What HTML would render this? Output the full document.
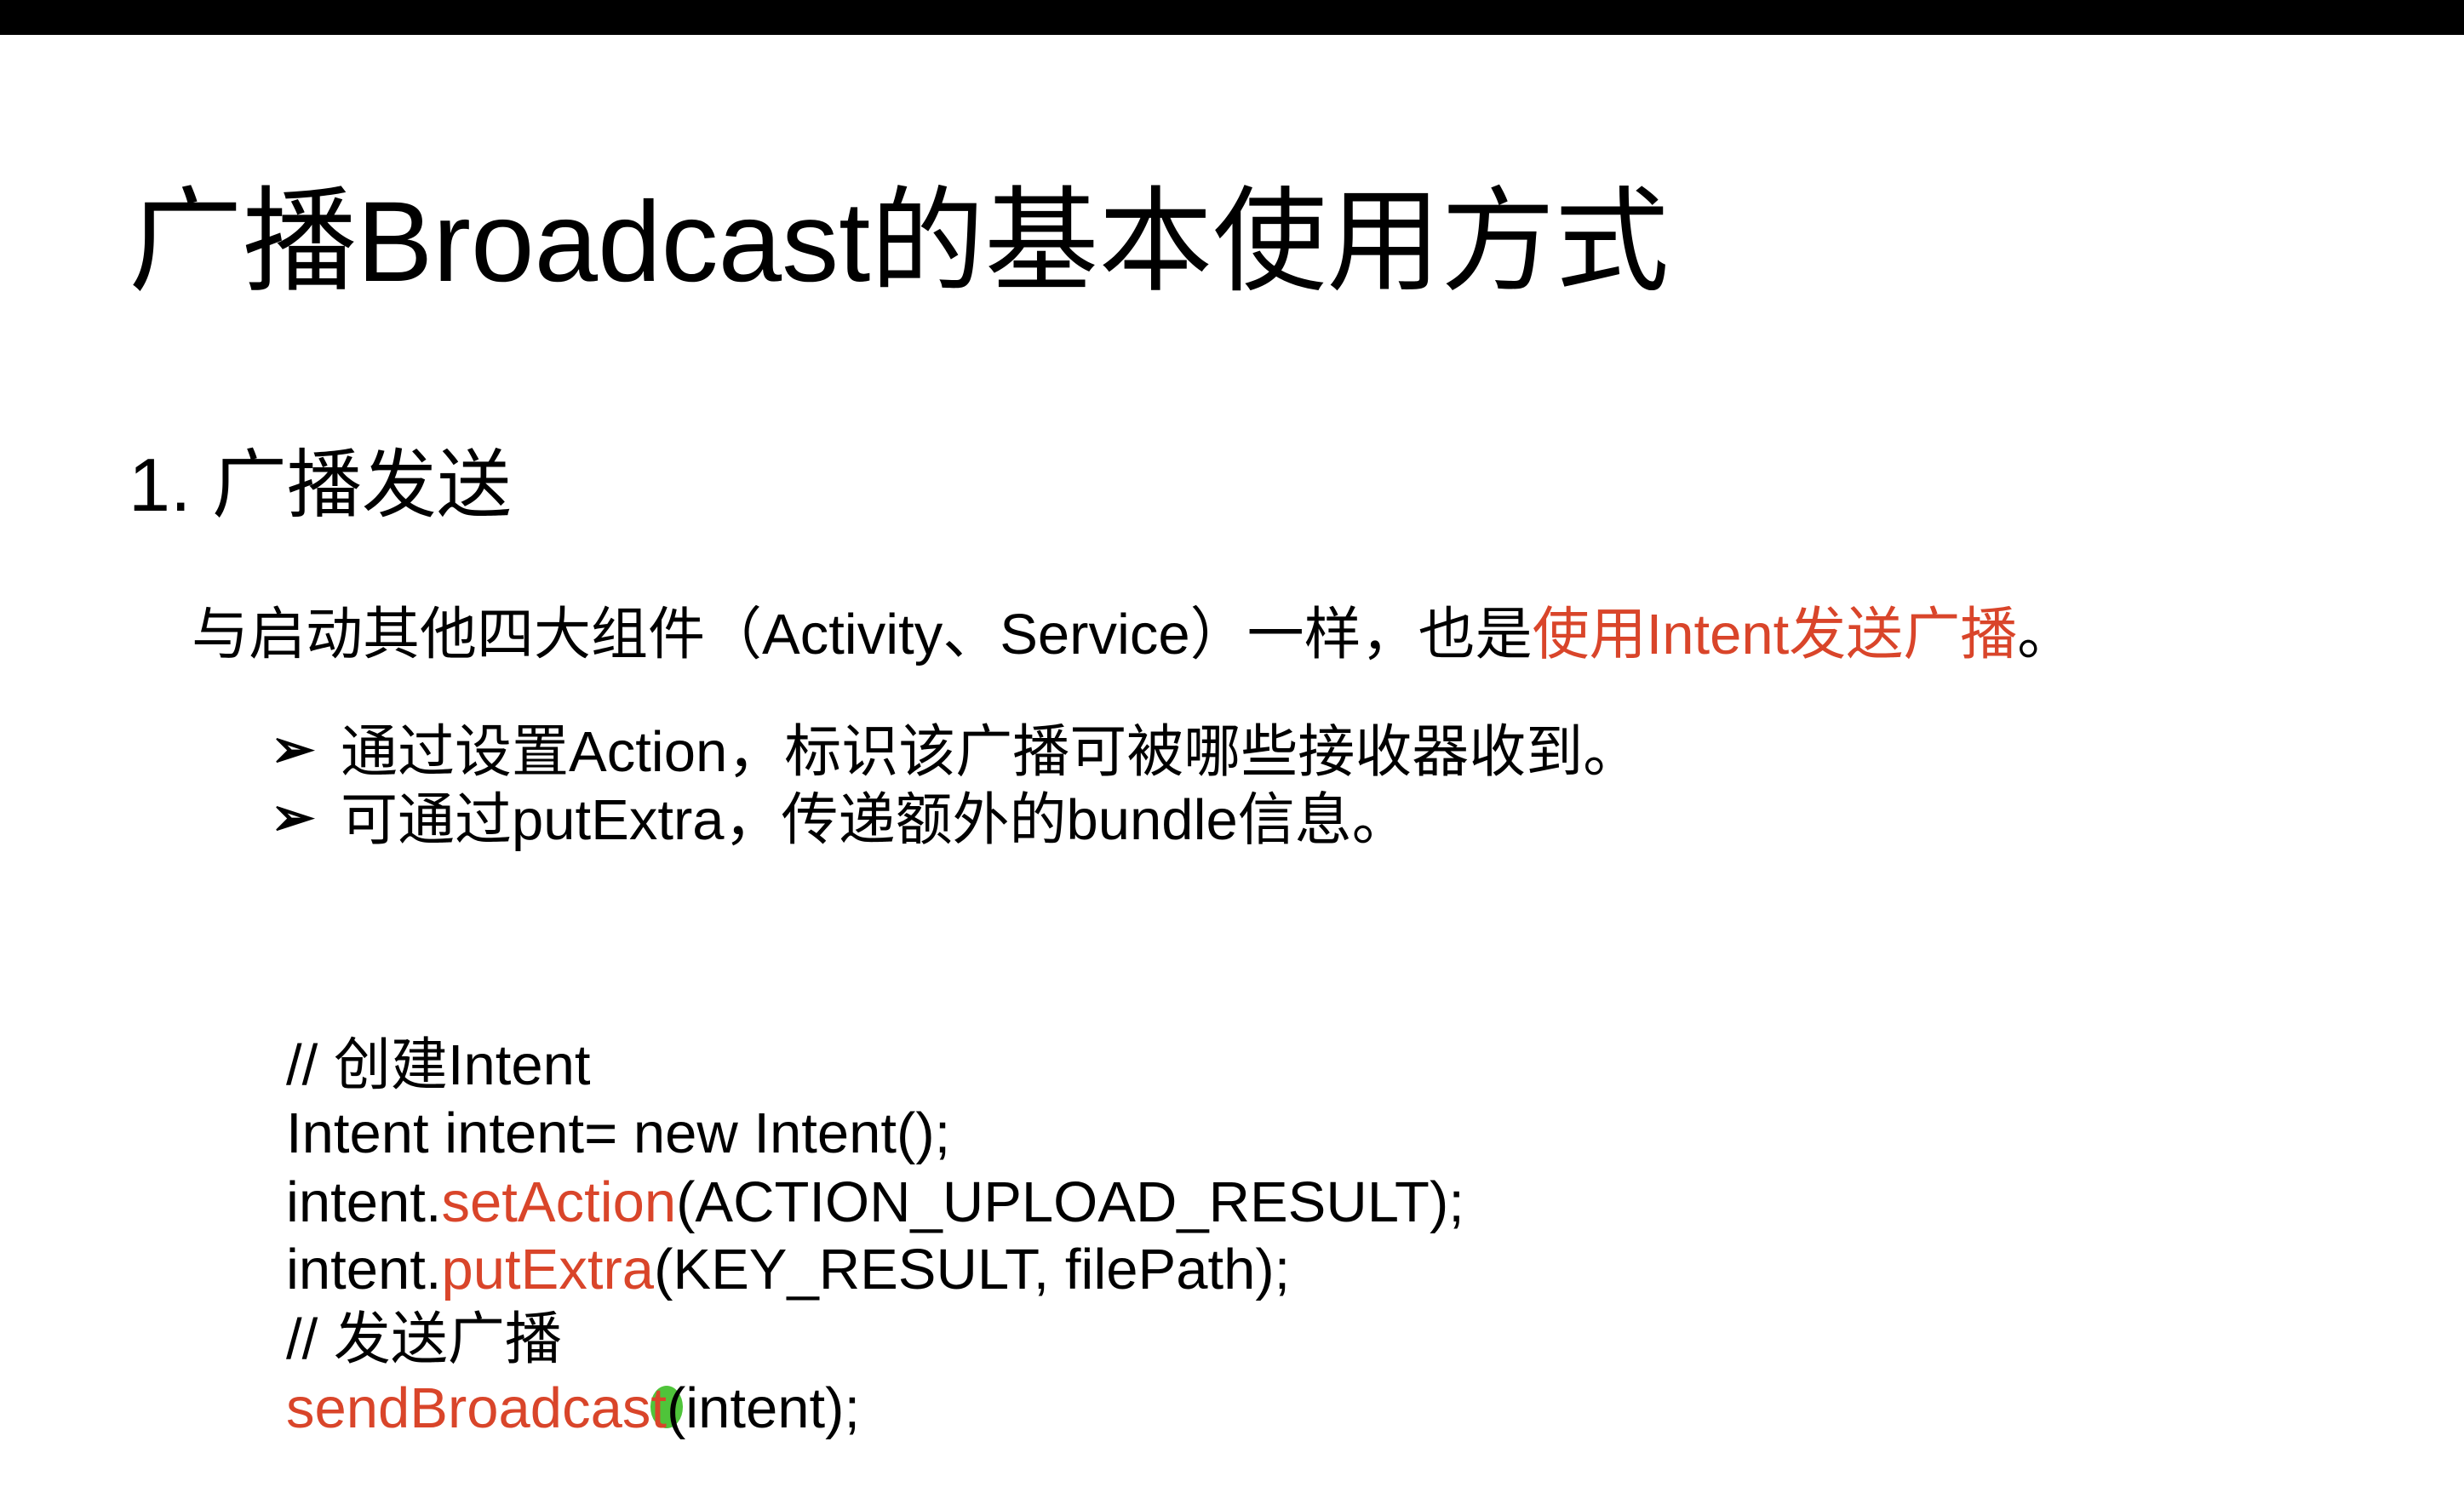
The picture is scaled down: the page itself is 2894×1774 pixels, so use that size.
<!DOCTYPE html>
<html><head><meta charset="utf-8"><style>
html,body{margin:0;padding:0;}
body{width:2894px;height:1774px;background:#fff;position:relative;overflow:hidden;font-family:"Liberation Sans","Noto Sans CJK SC",sans-serif;color:#000;}
.bar{position:absolute;left:0;top:0;width:2894px;height:41px;background:#000;}
.t{position:absolute;white-space:nowrap;line-height:1;}
.r{color:#d9452a;}
</style></head><body>
<div class="bar"></div>
<div class="t" style="left:151px;top:218px;font-size:134px;">广播Broadcast的基本使用方式</div>
<div class="t" style="left:151px;top:526px;font-size:88px;">1. 广播发送</div>
<div class="t" style="left:225px;top:712px;font-size:67px;">与启动其他四大组件（Activity、Service）一样，也是<span class="r">使用Intent发送广播</span>。</div>
<div class="t" style="left:318px;top:850px;font-size:62px;font-weight:bold;">➢</div>
<div class="t" style="left:400px;top:850px;font-size:67px;">通过设置Action，标识该广播可被哪些接收器收到。</div>
<div class="t" style="left:318px;top:930px;font-size:62px;font-weight:bold;">➢</div>
<div class="t" style="left:400px;top:930px;font-size:67px;">可通过putExtra，传递额外的bundle信息。</div>
<div class="t" style="left:336px;top:1218px;font-size:67px;">// 创建Intent</div>
<div class="t" style="left:336px;top:1298px;font-size:67px;">Intent intent= new Intent();</div>
<div class="t" style="left:336px;top:1379px;font-size:67px;">intent.<span class="r">setAction</span>(ACTION_UPLOAD_RESULT);</div>
<div class="t" style="left:336px;top:1458px;font-size:67px;">intent.<span class="r">putExtra</span>(KEY_RESULT, filePath);</div>
<div class="t" style="left:336px;top:1540px;font-size:67px;">// 发送广播</div>
<div style="position:absolute;left:764px;top:1628px;width:38px;height:50px;border-radius:50%;background:#4fc43a;"></div>
<div class="t" style="left:336px;top:1621px;font-size:67px;"><span class="r">sendBroadcast</span>(intent);</div>
</body></html>
